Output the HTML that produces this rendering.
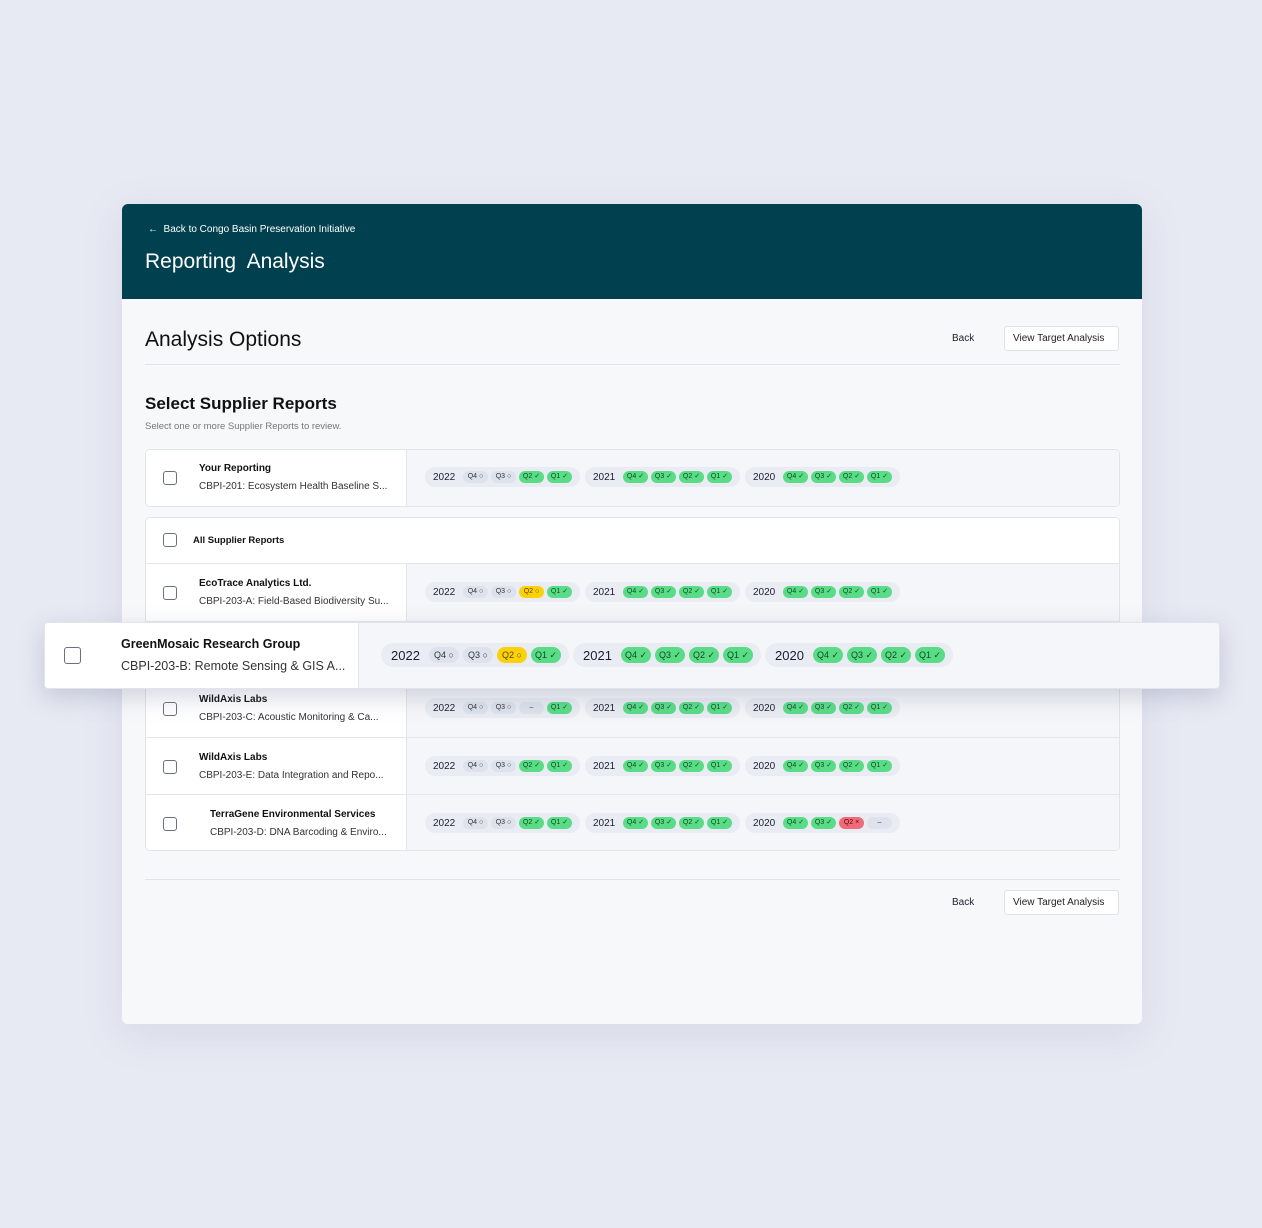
<!DOCTYPE html>
<html><head><meta charset="utf-8"><style>
*{box-sizing:border-box;margin:0;padding:0}
body{width:1262px;height:1228px;background:#e7e9f3;font-family:"Liberation Sans",sans-serif;position:relative;overflow:hidden;color:#1a1f2b}
.card{position:absolute;left:122px;top:204px;width:1020px;height:820px;background:#f7f8fa;border-radius:6px;overflow:hidden;box-shadow:0 10px 40px rgba(120,130,170,.15)}
.hdr{position:absolute;left:0;top:0;width:1020px;height:95px;background:#01404f;color:#fff}
.abs{position:absolute}
.btn{position:absolute;height:25px;border:1px solid #dfe2e8;background:#fff;border-radius:3px;font-size:10px;line-height:23px;padding:0 8px;color:#222}
.box{position:absolute;left:145px;width:975px;background:#fff;border:1px solid #e1e4ea;border-radius:5px;overflow:hidden}
.row{position:absolute;left:0;width:975px;border-top:1px solid #e4e6eb}
.lc{position:absolute;left:0;top:0;bottom:0;width:261px;background:#fff;border-right:1px solid #e4e6eb}
.rc{position:absolute;left:261px;right:0;top:0;bottom:0;background:#f5f6f9}
.cb{position:absolute;left:17px;width:14px;height:14px;border:1.5px solid #6b7080;border-radius:3px;background:#fff}
.t1{position:absolute;font-size:10px;font-weight:bold;color:#111}
.t2{position:absolute;font-size:10px;color:#333}
.grps{position:absolute;left:18px;display:flex;gap:5px}
.g{width:155px;height:20px;border-radius:10px;background:#e9ecf2;display:flex;align-items:center;padding-left:8px;font-size:10px}
.g .y{width:30px}
.c{width:25px;height:12px;border-radius:6px;margin-right:3px;font-size:7px;line-height:12px;text-align:center;color:#333;background:#dde2ec}
.c.G{background:#5adc86;color:#0a4a22}.c.Y{background:#fbd10a;color:#5a4300}.c.R{background:#f06b79;color:#5a0010}
.ov{position:absolute;left:44px;top:622px;width:1176px;height:67px;background:#f5f6f9;border:1px solid #e1e4ea;border-radius:4px;box-shadow:0 8px 24px rgba(90,100,140,.25);overflow:hidden}
.ov .g{width:188px;height:24px;border-radius:12px;font-size:13px;padding-left:10px}
.ov .g .y{width:38px}
.ov .c{width:30px;height:16px;border-radius:8px;font-size:9px;line-height:16px;margin-right:4px}
</style></head><body>
<div class="card">
 <div class="hdr">
  <div class="abs" style="left:26px;top:20px;font-size:10px">&#8592;&nbsp; Back to Congo Basin Preservation Initiative</div>
  <div class="abs" style="left:23px;top:46px;font-size:21px">Reporting&nbsp; Analysis</div>
 </div>
 <div class="abs" style="left:23px;top:124px;font-size:21px;color:#111">Analysis Options</div>
 <div class="abs" style="left:830px;top:129px;font-size:10px">Back</div>
 <div class="btn" style="left:882px;top:122px;width:115px">View Target Analysis</div>
 <div class="abs" style="left:23px;top:160px;width:975px;height:1px;background:#e2e4e9"></div>
 <div class="abs" style="left:23px;top:190px;font-size:17px;font-weight:bold;color:#111">Select Supplier Reports</div>
 <div class="abs" style="left:23px;top:217px;font-size:9.5px;color:#777">Select one or more Supplier Reports to review.</div>
 <div class="abs" style="left:23px;top:675px;width:975px;height:1px;background:#e2e4e9"></div>
 <div class="abs" style="left:830px;top:693px;font-size:10px">Back</div>
 <div class="btn" style="left:882px;top:686px;width:115px">View Target Analysis</div>
</div>

<div class="box" style="top:449px;height:58px">
 <div class="row" style="top:-1px;height:58px;border-top:0">
  <div class="lc"><div class="cb" style="top:22px"></div><div class="t1" style="left:53px;top:14px">Your Reporting</div><div class="t2" style="left:53px;top:32px">CBPI-201: Ecosystem Health Baseline S...</div></div>
  <div class="rc"><div class="grps" style="top:18px">
   <div class="g"><span class="y">2022</span><span class="c">Q4 ○</span><span class="c">Q3 ○</span><span class="c G">Q2 ✓</span><span class="c G">Q1 ✓</span></div>
   <div class="g"><span class="y">2021</span><span class="c G">Q4 ✓</span><span class="c G">Q3 ✓</span><span class="c G">Q2 ✓</span><span class="c G">Q1 ✓</span></div>
   <div class="g"><span class="y">2020</span><span class="c G">Q4 ✓</span><span class="c G">Q3 ✓</span><span class="c G">Q2 ✓</span><span class="c G">Q1 ✓</span></div>
  </div></div>
 </div>
</div>

<div class="box" style="top:517px;height:334px">
 <div class="row" style="top:0;height:45px;border-top:0;background:#fff"><div class="cb" style="top:15px"></div><div class="t1" style="left:47px;top:17px;font-size:9.5px">All Supplier Reports</div></div>
 <div class="row" style="top:45px;height:58px">
  <div class="lc"><div class="cb" style="top:22px"></div><div class="t1" style="left:53px;top:14px">EcoTrace Analytics Ltd.</div><div class="t2" style="left:53px;top:32px">CBPI-203-A: Field-Based Biodiversity Su...</div></div>
  <div class="rc"><div class="grps" style="top:18px">
   <div class="g"><span class="y">2022</span><span class="c">Q4 ○</span><span class="c">Q3 ○</span><span class="c Y">Q2 ○</span><span class="c G">Q1 ✓</span></div>
   <div class="g"><span class="y">2021</span><span class="c G">Q4 ✓</span><span class="c G">Q3 ✓</span><span class="c G">Q2 ✓</span><span class="c G">Q1 ✓</span></div>
   <div class="g"><span class="y">2020</span><span class="c G">Q4 ✓</span><span class="c G">Q3 ✓</span><span class="c G">Q2 ✓</span><span class="c G">Q1 ✓</span></div>
  </div></div>
 </div>
 <div class="row" style="top:103px;height:58px"><div class="lc"></div><div class="rc"></div></div>
 <div class="row" style="top:161px;height:58px">
  <div class="lc"><div class="cb" style="top:22px"></div><div class="t1" style="left:53px;top:14px">WildAxis Labs</div><div class="t2" style="left:53px;top:32px">CBPI-203-C: Acoustic Monitoring &amp; Ca...</div></div>
  <div class="rc"><div class="grps" style="top:18px">
   <div class="g"><span class="y">2022</span><span class="c">Q4 ○</span><span class="c">Q3 ○</span><span class="c">–</span><span class="c G">Q1 ✓</span></div>
   <div class="g"><span class="y">2021</span><span class="c G">Q4 ✓</span><span class="c G">Q3 ✓</span><span class="c G">Q2 ✓</span><span class="c G">Q1 ✓</span></div>
   <div class="g"><span class="y">2020</span><span class="c G">Q4 ✓</span><span class="c G">Q3 ✓</span><span class="c G">Q2 ✓</span><span class="c G">Q1 ✓</span></div>
  </div></div>
 </div>
 <div class="row" style="top:219px;height:58px">
  <div class="lc"><div class="cb" style="top:22px"></div><div class="t1" style="left:53px;top:14px">WildAxis Labs</div><div class="t2" style="left:53px;top:32px">CBPI-203-E: Data Integration and Repo...</div></div>
  <div class="rc"><div class="grps" style="top:18px">
   <div class="g"><span class="y">2022</span><span class="c">Q4 ○</span><span class="c">Q3 ○</span><span class="c G">Q2 ✓</span><span class="c G">Q1 ✓</span></div>
   <div class="g"><span class="y">2021</span><span class="c G">Q4 ✓</span><span class="c G">Q3 ✓</span><span class="c G">Q2 ✓</span><span class="c G">Q1 ✓</span></div>
   <div class="g"><span class="y">2020</span><span class="c G">Q4 ✓</span><span class="c G">Q3 ✓</span><span class="c G">Q2 ✓</span><span class="c G">Q1 ✓</span></div>
  </div></div>
 </div>
 <div class="row" style="top:276px;height:58px">
  <div class="lc"><div class="cb" style="top:22px"></div><div class="t1" style="left:64px;top:14px">TerraGene Environmental Services</div><div class="t2" style="left:64px;top:32px">CBPI-203-D: DNA Barcoding &amp; Enviro...</div></div>
  <div class="rc"><div class="grps" style="top:18px">
   <div class="g"><span class="y">2022</span><span class="c">Q4 ○</span><span class="c">Q3 ○</span><span class="c G">Q2 ✓</span><span class="c G">Q1 ✓</span></div>
   <div class="g"><span class="y">2021</span><span class="c G">Q4 ✓</span><span class="c G">Q3 ✓</span><span class="c G">Q2 ✓</span><span class="c G">Q1 ✓</span></div>
   <div class="g"><span class="y">2020</span><span class="c G">Q4 ✓</span><span class="c G">Q3 ✓</span><span class="c R">Q2 ×</span><span class="c">–</span></div>
  </div></div>
 </div>
</div>

<div class="ov">
 <div class="abs" style="left:0;top:0;width:314px;height:67px;background:#fff;border-right:1px solid #e4e6eb">
  <div class="cb" style="left:19px;top:24px;width:17px;height:17px"></div>
  <div class="abs" style="left:76px;top:14px;font-size:12.5px;font-weight:bold;color:#111">GreenMosaic Research Group</div>
  <div class="abs" style="left:76px;top:36px;font-size:12.5px;color:#333">CBPI-203-B: Remote Sensing &amp; GIS A...</div>
 </div>
 <div class="grps" style="left:336px;top:20px;gap:4px">
  <div class="g"><span class="y">2022</span><span class="c">Q4 ○</span><span class="c">Q3 ○</span><span class="c Y">Q2 ○</span><span class="c G">Q1 ✓</span></div>
  <div class="g"><span class="y">2021</span><span class="c G">Q4 ✓</span><span class="c G">Q3 ✓</span><span class="c G">Q2 ✓</span><span class="c G">Q1 ✓</span></div>
  <div class="g"><span class="y">2020</span><span class="c G">Q4 ✓</span><span class="c G">Q3 ✓</span><span class="c G">Q2 ✓</span><span class="c G">Q1 ✓</span></div>
 </div>
</div>
</body></html>
